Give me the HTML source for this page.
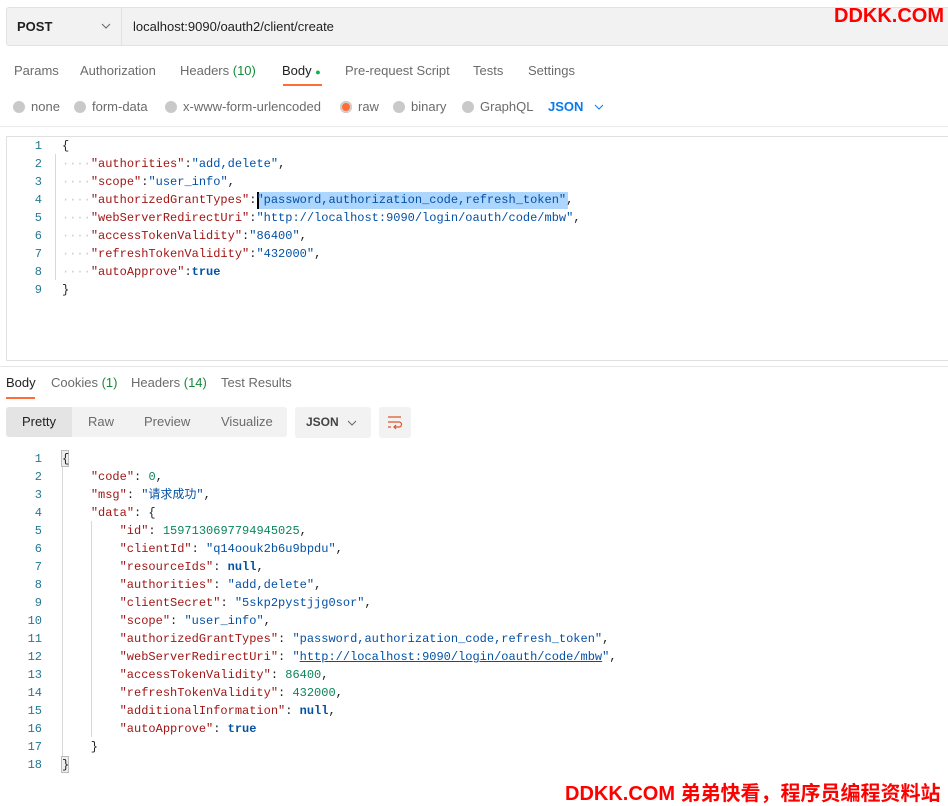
<!DOCTYPE html>
<html><head><meta charset="utf-8"><style>
*{margin:0;padding:0;box-sizing:border-box}
body{width:948px;height:802px;background:#fff;position:relative;overflow:hidden;font-family:"Liberation Sans","Noto Sans CJK SC",sans-serif;font-size:13px;color:#212121}
.a{position:absolute;white-space:pre}
.code{font-family:"Liberation Mono","Noto Sans CJK SC",monospace;font-size:12px;line-height:18px}
.ln{position:absolute;width:42px;text-align:right;color:#237893;font-family:"Liberation Mono",monospace;font-size:12px;line-height:18px}
.k{color:#a31515}.s{color:#0451a5}.n{color:#098658}.b{color:#0451a5;font-weight:bold}.d{color:#ccc}
.tab{color:#6b6b6b}
.rad{display:inline-block;width:12px;height:12px;border-radius:50%;background:#c9c9c9;vertical-align:-2px;margin-right:6px}
.ig{position:absolute;width:1px;background:#d8d8d8}
</style></head><body>
<div class="a" style="left:6px;top:7px;width:950px;height:39px;background:#f2f2f2;border:1px solid #e2e2e2;border-radius:3px"></div>
<div class="a" style="left:121px;top:8px;width:1px;height:37px;background:#e2e2e2"></div>
<div class="a" style="left:17px;top:19px;font-weight:bold;font-size:13px">POST</div>
<svg class="a" style="left:101px;top:23px" width="10" height="6"><path d="M1 1L5 5L9 1" stroke="#666" fill="none"/></svg>
<div class="a" style="left:133px;top:19px;font-size:13px">localhost:9090/oauth2/client/create</div>
<div class="a" style="left:834px;top:5px;font-size:20px;font-weight:bold;color:#ff0000">DDKK.COM</div>
<div class="a tab" style="left:14px;top:63px">Params</div>
<div class="a tab" style="left:80px;top:63px">Authorization</div>
<div class="a tab" style="left:180px;top:63px">Headers <span style="color:#168a3b">(10)</span></div>
<div class="a" style="left:282px;top:63px">Body <span style="color:#0cb14b;font-size:9px">●</span></div>
<div class="a" style="left:283px;top:84px;width:39px;height:2px;background:#ff6c37"></div>
<div class="a tab" style="left:345px;top:63px">Pre-request Script</div>
<div class="a tab" style="left:473px;top:63px">Tests</div>
<div class="a tab" style="left:528px;top:63px">Settings</div>
<div class="a tab" style="left:13px;top:99px"><span class="rad"></span>none</div>
<div class="a tab" style="left:74px;top:99px"><span class="rad"></span>form-data</div>
<div class="a tab" style="left:165px;top:99px"><span class="rad"></span>x-www-form-urlencoded</div>
<div class="a tab" style="left:340px;top:99px"><span class="rad" style="background:#ff6c37;box-shadow:inset 0 0 0 2px #d0d0d0"></span>raw</div>
<div class="a tab" style="left:393px;top:99px"><span class="rad"></span>binary</div>
<div class="a tab" style="left:462px;top:99px"><span class="rad"></span>GraphQL</div>
<div class="a" style="left:548px;top:99px;color:#097bed;font-weight:bold">JSON</div>
<svg class="a" style="left:594px;top:104px" width="10" height="6"><path d="M1 1L5 5L9 1" stroke="#097bed" fill="none"/></svg>
<div class="a" style="left:0;top:126px;width:948px;height:1px;background:#ececec"></div>
<div class="a" style="left:6px;top:136px;width:950px;height:225px;border:1px solid #e0e0e0;border-right:none"></div>
<div class="ig" style="left:55px;top:154px;height:126px"></div>
<div class="ln" style="left:0;top:137px">1<br>2<br>3<br>4<br>5<br>6<br>7<br>8<br>9</div>
<div class="a" style="left:258px;top:192px;width:310px;height:17px;background:#add6ff"></div>
<div class="a" style="left:257px;top:192px;width:2px;height:17px;background:#000"></div>
<div class="a code" style="left:62px;top:137px">{
<span class="d">····</span><span class="k">"authorities"</span>:<span class="s">"add,delete"</span>,
<span class="d">····</span><span class="k">"scope"</span>:<span class="s">"user_info"</span>,
<span class="d">····</span><span class="k">"authorizedGrantTypes"</span>:<span class="s">"password,authorization_code,refresh_token"</span>,
<span class="d">····</span><span class="k">"webServerRedirectUri"</span>:<span class="s">"http://localhost:9090/login/oauth/code/mbw"</span>,
<span class="d">····</span><span class="k">"accessTokenValidity"</span>:<span class="s">"86400"</span>,
<span class="d">····</span><span class="k">"refreshTokenValidity"</span>:<span class="s">"432000"</span>,
<span class="d">····</span><span class="k">"autoApprove"</span>:<span class="b">true</span>
}</div>
<div class="a" style="left:0;top:366px;width:948px;height:1px;background:#e6e6e6"></div>
<div class="a" style="left:6px;top:375px">Body</div>
<div class="a" style="left:6px;top:397px;width:29px;height:2px;background:#ff6c37"></div>
<div class="a tab" style="left:51px;top:375px">Cookies <span style="color:#168a3b">(1)</span></div>
<div class="a tab" style="left:131px;top:375px">Headers <span style="color:#168a3b">(14)</span></div>
<div class="a tab" style="left:221px;top:375px">Test Results</div>
<div class="a" style="left:6px;top:407px;width:281px;height:30px;background:#f2f2f2;border-radius:3px"></div>
<div class="a" style="left:6px;top:407px;width:66px;height:30px;background:#e4e4e4;border-radius:3px 0 0 3px"></div>
<div class="a" style="left:22px;top:414px">Pretty</div>
<div class="a tab" style="left:88px;top:414px">Raw</div>
<div class="a tab" style="left:144px;top:414px">Preview</div>
<div class="a tab" style="left:221px;top:414px">Visualize</div>
<div class="a" style="left:295px;top:407px;width:76px;height:31px;background:#f2f2f2;border-radius:3px"></div>
<div class="a" style="left:306px;top:415px;font-weight:bold;font-size:12px;color:#444">JSON</div>
<svg class="a" style="left:347px;top:420px" width="10" height="6"><path d="M1 1L5 5L9 1" stroke="#666" fill="none"/></svg>
<div class="a" style="left:379px;top:407px;width:32px;height:31px;background:#f2f2f2;border-radius:3px"></div>
<svg class="a" style="left:387px;top:414px" width="16" height="16"><path d="M1 3H14M1 8H12a2.5 2.5 0 0 1 0 5H7M9 11L7 13L9 15M1 13H4" stroke="#e0542a" stroke-width="1.2" fill="none"/></svg>
<div class="ig" style="left:62px;top:467px;height:297px"></div>
<div class="ig" style="left:91px;top:521px;height:216px"></div>
<div class="a" style="left:61px;top:450px;width:8px;height:17px;border:1px solid #bbb;background:#eee"></div>
<div class="a" style="left:61px;top:756px;width:8px;height:17px;border:1px solid #bbb;background:#eee"></div>
<div class="ln" style="left:0;top:450px">1<br>2<br>3<br>4<br>5<br>6<br>7<br>8<br>9<br>10<br>11<br>12<br>13<br>14<br>15<br>16<br>17<br>18</div>
<div class="a code" style="left:62px;top:450px">{
    <span class="k">"code"</span>: <span class="n">0</span>,
    <span class="k">"msg"</span>: <span class="s">"请求成功"</span>,
    <span class="k">"data"</span>: {
        <span class="k">"id"</span>: <span class="n">1597130697794945025</span>,
        <span class="k">"clientId"</span>: <span class="s">"q14oouk2b6u9bpdu"</span>,
        <span class="k">"resourceIds"</span>: <span class="b">null</span>,
        <span class="k">"authorities"</span>: <span class="s">"add,delete"</span>,
        <span class="k">"clientSecret"</span>: <span class="s">"5skp2pystjjg0sor"</span>,
        <span class="k">"scope"</span>: <span class="s">"user_info"</span>,
        <span class="k">"authorizedGrantTypes"</span>: <span class="s">"password,authorization_code,refresh_token"</span>,
        <span class="k">"webServerRedirectUri"</span>: <span class="s">"<u>http://localhost:9090/login/oauth/code/mbw</u>"</span>,
        <span class="k">"accessTokenValidity"</span>: <span class="n">86400</span>,
        <span class="k">"refreshTokenValidity"</span>: <span class="n">432000</span>,
        <span class="k">"additionalInformation"</span>: <span class="b">null</span>,
        <span class="k">"autoApprove"</span>: <span class="b">true</span>
    }
}</div>
<div class="a" style="left:565px;top:777px;font-size:20px;font-weight:bold;color:#ff0000;font-family:'Liberation Sans','Noto Sans CJK SC',sans-serif">DDKK.COM 弟弟快看，程序员编程资料站</div>
</body></html>
